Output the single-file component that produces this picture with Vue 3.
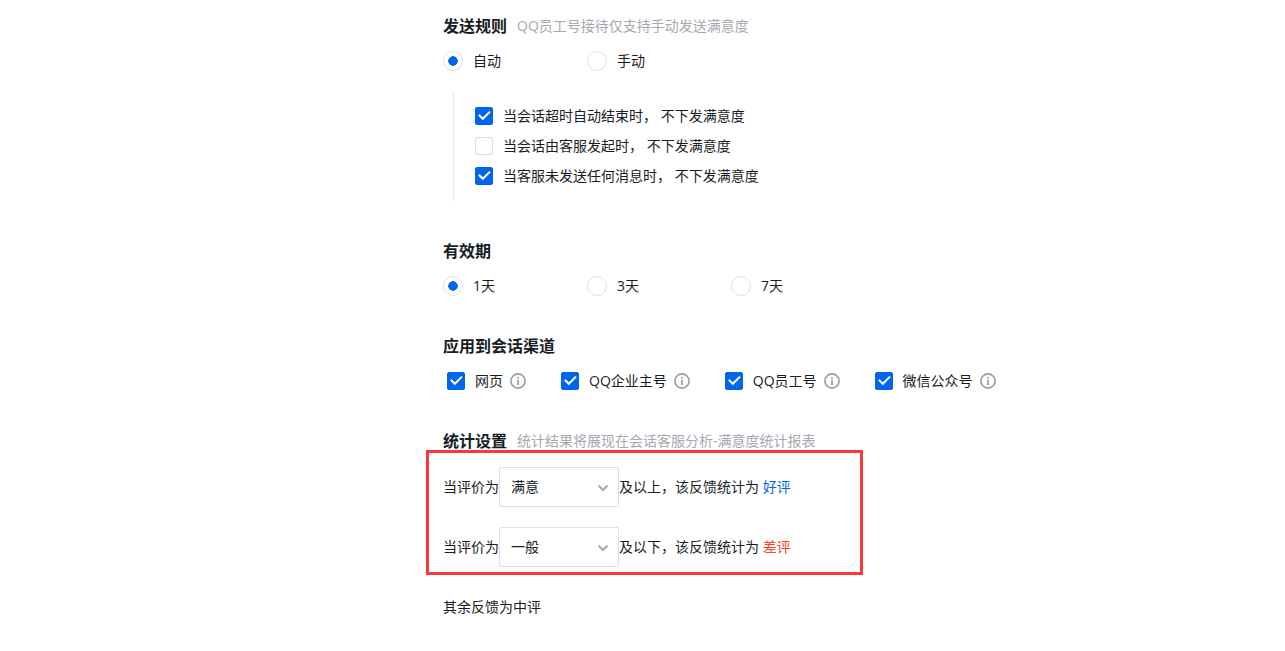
<script setup>
import { ref } from 'vue'

const sendMode = ref('auto')
const sendModes = [
  { value: 'auto', label: '自动' },
  { value: 'manual', label: '手动' },
]

const rules = ref([
  { label: '当会话超时自动结束时， 不下发满意度', checked: true },
  { label: '当会话由客服发起时， 不下发满意度', checked: false },
  { label: '当客服未发送任何消息时， 不下发满意度', checked: true },
])

const validity = ref('1')
const validities = [
  { value: '1', label: '1天' },
  { value: '3', label: '3天' },
  { value: '7', label: '7天' },
]

const channels = ref([
  { label: '网页', checked: true },
  { label: 'QQ企业主号', checked: true },
  { label: 'QQ员工号', checked: true },
  { label: '微信公众号', checked: true },
])

const levels = ['满意', '一般']
const stats = ref([
  { id: 'good-level', level: '满意', text: '及以上，该反馈统计为', result: '好评', tone: 'good' },
  { id: 'bad-level', level: '一般', text: '及以下，该反馈统计为', result: '差评', tone: 'bad' },
])
</script>

<template>
  <main class="settings">
    <section class="section">
      <header class="heading">
        <h2>发送规则</h2>
        <span class="hint">QQ员工号接待仅支持手动发送满意度</span>
      </header>
      <div class="radios">
        <label v-for="m in sendModes" :key="m.value" class="radio">
          <input v-model="sendMode" type="radio" name="mode" :value="m.value" />
          <span>{{ m.label }}</span>
        </label>
      </div>
      <div class="rules">
        <label v-for="r in rules" :key="r.label" class="check">
          <span class="box">
            <input v-model="r.checked" type="checkbox" />
            <svg v-if="r.checked" viewBox="0 0 18 18" aria-hidden="true"><path d="M3.800 7.800 7.800 11.800 15 4.600" /></svg>
          </span>
          <span>{{ r.label }}</span>
        </label>
      </div>
    </section>

    <section class="section">
      <header class="heading"><h2>有效期</h2></header>
      <div class="radios">
        <label v-for="v in validities" :key="v.value" class="radio">
          <input v-model="validity" type="radio" name="validity" :value="v.value" />
          <span>{{ v.label }}</span>
        </label>
      </div>
    </section>

    <section class="section">
      <header class="heading"><h2>应用到会话渠道</h2></header>
      <div class="channels">
        <div v-for="c in channels" :key="c.label" class="channel">
          <label class="check">
            <span class="box">
              <input v-model="c.checked" type="checkbox" />
              <svg v-if="c.checked" viewBox="0 0 18 18" aria-hidden="true"><path d="M3.800 7.800 7.800 11.800 15 4.600" /></svg>
            </span>
            <span>{{ c.label }}</span>
          </label>
          <svg class="info" viewBox="0 0 16 16" aria-hidden="true">
            <circle cx="8" cy="8" r="7.100" />
            <path d="M8 4v1.600M8 6.800v5.200" />
          </svg>
        </div>
      </div>
    </section>

    <section class="section">
      <header class="heading">
        <h2>统计设置</h2>
        <span class="hint">统计结果将展现在会话客服分析-满意度统计报表</span>
      </header>
      <div class="stats">
        <div v-for="s in stats" :key="s.id" class="stat">
          <label :for="s.id">当评价为</label>
          <span class="picker">
            <select :id="s.id" v-model="s.level">
              <option v-for="l in levels" :key="l">{{ l }}</option>
            </select>
            <svg viewBox="0 0 12 8" aria-hidden="true"><path d="M1.500 1.500 6 6l4.500-4.500" /></svg>
          </span>
          <span>{{ s.text }} <span :class="s.tone">{{ s.result }}</span></span>
        </div>
      </div>
      <p class="rest">其余反馈为中评</p>
    </section>
  </main>
</template>

<style>
body {
  background: #fff;
}
</style>

<style scoped>
.settings {
  display: flex;
  flex-direction: column;
  gap: 38px;
  padding: 14px 16px 34px 443px;
  font: 14px/20px "Open Sans", "Noto Sans CJK SC", sans-serif;
  color: #181c25;
  white-space: nowrap;
}
.heading {
  display: flex;
  align-items: center;
  gap: 10px;
  height: 24px;
}
h2 {
  margin: 0;
  font-size: 16px;
  line-height: 24px;
  font-weight: 700;
}
.hint {
  color: #a5a8b0;
}
.radios {
  display: flex;
  margin-top: 13px;
}
.radio {
  display: flex;
  align-items: center;
  gap: 10px;
  width: 144px;
}
.radio input {
  appearance: none;
  box-sizing: border-box;
  width: 20px;
  height: 20px;
  margin: 0;
  border: 1px solid #dcdfe8;
  border-radius: 50%;
  background: #fff;
}
.radio input:checked {
  background: #0067ed content-box;
  padding: 4px;
  background: radial-gradient(circle closest-side, #0067ed 92%, #fff 100%) content-box;
}
.rules {
  margin: 20px 0 0 10px;
  padding: 10px 0 10px 21px;
  border-left: 1px solid #e6e8ed;
}
.check {
  display: flex;
  align-items: center;
  gap: 10px;
}
.rules .check {
  height: 30px;
}
.box {
  position: relative;
  width: 18px;
  height: 18px;
}
.box input {
  appearance: none;
  box-sizing: border-box;
  display: block;
  width: 18px;
  height: 18px;
  margin: 0;
  border: 1px solid #dcdfe8;
  border-radius: 2px;
  background: #fff;
}
.box input:checked {
  border-color: #0067ed;
  background: #0067ed;
}
.box svg {
  position: absolute;
  inset: 0;
  fill: none;
  stroke: #fff;
  stroke-width: 2;
  pointer-events: none;
}
.channels {
  display: flex;
  gap: 35px;
  margin-top: 13px;
  padding-left: 4px;
}
.channel {
  display: flex;
  align-items: center;
  gap: 7px;
}
.info {
  width: 16px;
  height: 16px;
  fill: none;
  stroke: #989ba6;
  stroke-width: 1.7;
}
.stats {
  display: flex;
  flex-direction: column;
  gap: 20px;
  box-sizing: border-box;
  width: 437px;
  margin: -3px 0 0 -17px;
  padding: 14px 0 5px 14px;
  border: 3px solid #fa373b;
}
.stat {
  display: flex;
  align-items: center;
}
.picker {
  position: relative;
}
.picker select {
  appearance: none;
  display: block;
  box-sizing: border-box;
  width: 120px;
  height: 40px;
  padding: 0 30px 0 11px;
  border: 1px solid #dcdfe8;
  border-radius: 2px;
  background: #fff;
  color: inherit;
  font: inherit;
}
.picker svg {
  position: absolute;
  right: 10px;
  top: 17px;
  width: 12px;
  height: 8px;
  fill: none;
  stroke: #a9abb5;
  stroke-width: 2;
  pointer-events: none;
}
.good {
  color: #0067ed;
}
.bad {
  color: #fb4224;
}
.rest {
  margin: 22px 0 0;
}
</style>
